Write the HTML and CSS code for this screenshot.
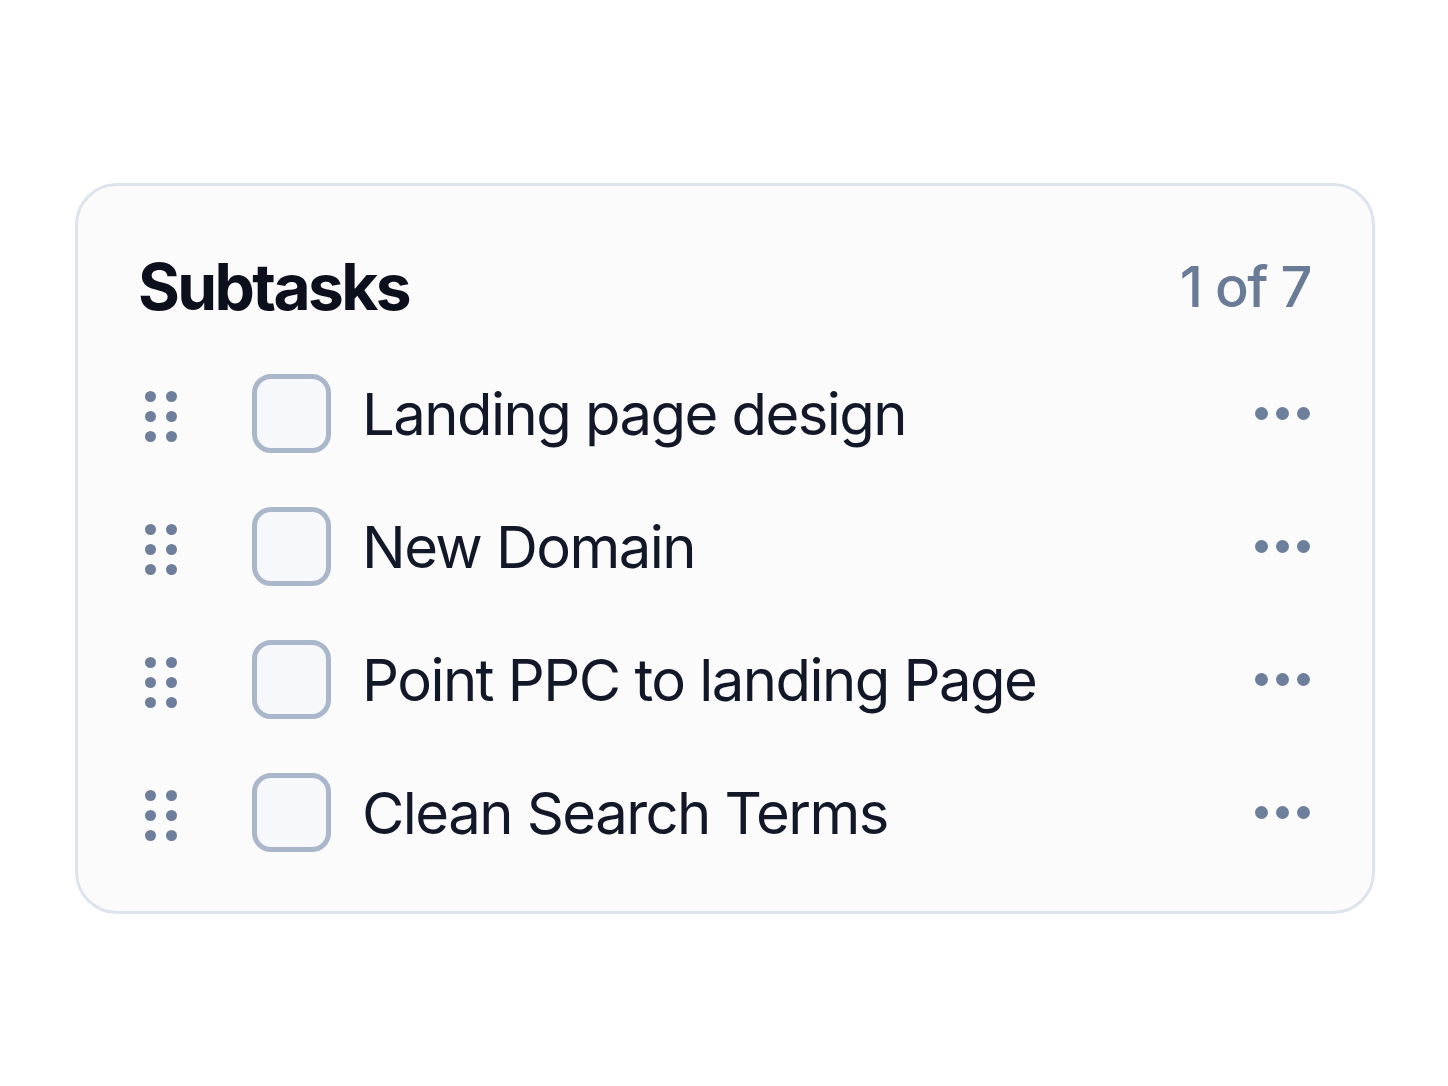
FILE: index.html
```html
<!DOCTYPE html>
<html lang="en">
<head>
<meta charset="utf-8">
<title>Subtasks</title>
<link rel="stylesheet" href="styles.css">
</head>
<body>
<div class="page">
  <section class="card">
    <header class="card-head">
      <h1 class="title">Subtasks</h1>
      <span class="count">1 of 7</span>
    </header>
    <ul class="list">
      <li class="row">
        <span class="handle"><i></i><i></i><i></i><i></i><i></i><i></i></span>
        <span class="check"></span>
        <span class="label">Landing page design</span>
        <span class="more"><i></i><i></i><i></i></span>
      </li>
      <li class="row">
        <span class="handle"><i></i><i></i><i></i><i></i><i></i><i></i></span>
        <span class="check"></span>
        <span class="label">New Domain</span>
        <span class="more"><i></i><i></i><i></i></span>
      </li>
      <li class="row">
        <span class="handle"><i></i><i></i><i></i><i></i><i></i><i></i></span>
        <span class="check"></span>
        <span class="label">Point PPC to landing Page</span>
        <span class="more"><i></i><i></i><i></i></span>
      </li>
      <li class="row">
        <span class="handle"><i></i><i></i><i></i><i></i><i></i><i></i></span>
        <span class="check"></span>
        <span class="label">Clean Search Terms</span>
        <span class="more"><i></i><i></i><i></i></span>
      </li>
    </ul>
  </section>
</div>
</body>
</html>
```
FILE: styles.css
```css
* { box-sizing: border-box; }
html, body {
  margin: 0;
  padding: 0;
  background: #ffffff;
  font-family: Inter, "Noto Sans", "Liberation Sans", sans-serif;
}
.page {
  padding: 183px 0 0 75px;
}
.card {
  width: 1300px;
  height: 731px;
  border: 3px solid #dde4ee;
  border-radius: 42px;
  background: #fbfbfc;
  padding: 61px 61px 32px 60px;
}
.card-head {
  height: 80px;
  display: flex;
  align-items: center;
  justify-content: space-between;
}
.title {
  margin: 0;
  font-size: 64px;
  line-height: 1;
  font-weight: 700;
  color: #0b101c;
  letter-spacing: -2.6px;
}
.count {
  font-size: 56px;
  line-height: 1;
  font-weight: 500;
  color: #6a7b97;
  letter-spacing: -1.5px;
}
.list {
  list-style: none;
  margin: 20px 0 0;
  padding: 0;
}
.row {
  height: 133px;
  display: flex;
  align-items: center;
}
.handle {
  display: grid;
  grid-template-columns: 11px 11px;
  grid-auto-rows: 11px;
  column-gap: 10px;
  row-gap: 9px;
  margin: 6px 0 0 7px;
}
.handle i, .more i {
  display: block;
  width: 11px;
  height: 11px;
  border-radius: 50%;
  background: #6e7f9b;
}
.check {
  width: 79px;
  height: 79px;
  margin-left: 75px;
  border: 5px solid #aab6ca;
  border-radius: 19px;
  background: #f6f8fb;
  flex: none;
}
.label {
  margin-left: 31px;
  font-size: 58px;
  line-height: 1;
  font-weight: 400;
  color: #121827;
  letter-spacing: -1.55px;
  flex: 1;
}
.more {
  display: flex;
  gap: 8px;
  margin-right: 1px;
}
.more i {
  width: 13px;
  height: 13px;
}
```
